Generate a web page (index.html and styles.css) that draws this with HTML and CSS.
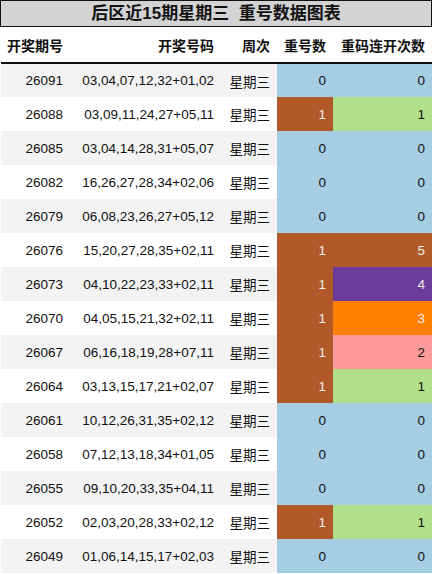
FILE: index.html
```html
<!DOCTYPE html>
<html lang="zh">
<head>
    <meta charset="UTF-8">
    <meta name="viewport" content="width=device-width, initial-scale=1.0">
    <title>后区近15期星期三 重号数据图表</title>
    <link rel="stylesheet" href="styles.css">
</head>
<body>
    <div class="chart">
        <div class="chart-title">后区近15期星期三&nbsp;&nbsp;重号数据图表</div>
        <table class="data-table">
            <colgroup>
                <col class="col-issue">
                <col class="col-nums">
                <col class="col-week">
                <col class="col-repeat">
                <col class="col-streak">
            </colgroup>
            <thead>
                <tr>
                    <th>开奖期号</th>
                    <th>开奖号码</th>
                    <th>周次</th>
                    <th>重号数</th>
                    <th>重码连开次数</th>
                </tr>
            </thead>
            <tbody id="rows">
                <!-- rows are filled in by the script below -->
            </tbody>
        </table>
    </div>

    <script>
        // issue, numbers, repeat count, streak count
        const draws = [
            ["26091", "03,04,07,12,32+01,02", 0, 0],
            ["26088", "03,09,11,24,27+05,11", 1, 1],
            ["26085", "03,04,14,28,31+05,07", 0, 0],
            ["26082", "16,26,27,28,34+02,06", 0, 0],
            ["26079", "06,08,23,26,27+05,12", 0, 0],
            ["26076", "15,20,27,28,35+02,11", 1, 5],
            ["26073", "04,10,22,23,33+02,11", 1, 4],
            ["26070", "04,05,15,21,32+02,11", 1, 3],
            ["26067", "06,16,18,19,28+07,11", 1, 2],
            ["26064", "03,13,15,17,21+02,07", 1, 1],
            ["26061", "10,12,26,31,35+02,12", 0, 0],
            ["26058", "07,12,13,18,34+01,05", 0, 0],
            ["26055", "09,10,20,33,35+04,11", 0, 0],
            ["26052", "02,03,20,28,33+02,12", 1, 1],
            ["26049", "01,06,14,15,17+02,03", 0, 0]
        ];

        const tbody = document.getElementById('rows');
        draws.forEach(d => {
            tbody.innerHTML += `
                <tr>
                    <td>${d[0]}</td>
                    <td>${d[1]}</td>
                    <td>星期三</td>
                    <td class="${d[2] ? 'hit' : 'miss'}">${d[2]}</td>
                    <td class="streak-${d[3]}">${d[3]}</td>
                </tr>
            `;
        });
    </script>
</body>
</html>
```

FILE: styles.css
```css
* {
    margin: 0;
    padding: 0;
    box-sizing: border-box;
}

body {
    background: #fff;
    color: #111;
    font-family: "Liberation Sans", "Noto Sans CJK SC", sans-serif;
    width: 432px;
}

.chart-title {
    height: 27px;
    line-height: 25px;
    background: #d3d3d3;
    border: 1px solid #111;
    text-align: center;
    font-size: 17px;
    font-weight: bold;
}

.data-table {
    margin-left: 1px;
    width: 431px;
    border-collapse: collapse;
    table-layout: fixed;
    font-size: 13.5px;
}

.col-issue { width: 69px; }
.col-nums { width: 151px; }
.col-week { width: 56px; }
.col-repeat { width: 56px; }
.col-streak { width: 99px; }

.data-table th,
.data-table td {
    text-align: right;
    padding: 0 7px 0 0;
    white-space: nowrap;
}

.data-table th {
    height: 36px;
    font-size: 14px;
    font-weight: bold;
    border-bottom: 2px solid #111;
    background: #fff;
}

.data-table td {
    height: 34px;
}

.data-table tbody tr:nth-child(odd) {
    background: #f3f3f3;
}

.data-table tbody tr:nth-child(even) {
    background: #fff;
}

.miss,
.streak-0 { background: #a6cee3; }

.hit {
    background: #b15928;
    color: #eee;
}

.streak-1 { background: #b2df8a; }
.streak-2 { background: #fb9a99; }

.streak-3 {
    background: #ff7f00;
    color: #eee;
}

.streak-4 {
    background: #6a3d9a;
    color: #eee;
}

.streak-5 {
    background: #b15928;
    color: #eee;
}
```
